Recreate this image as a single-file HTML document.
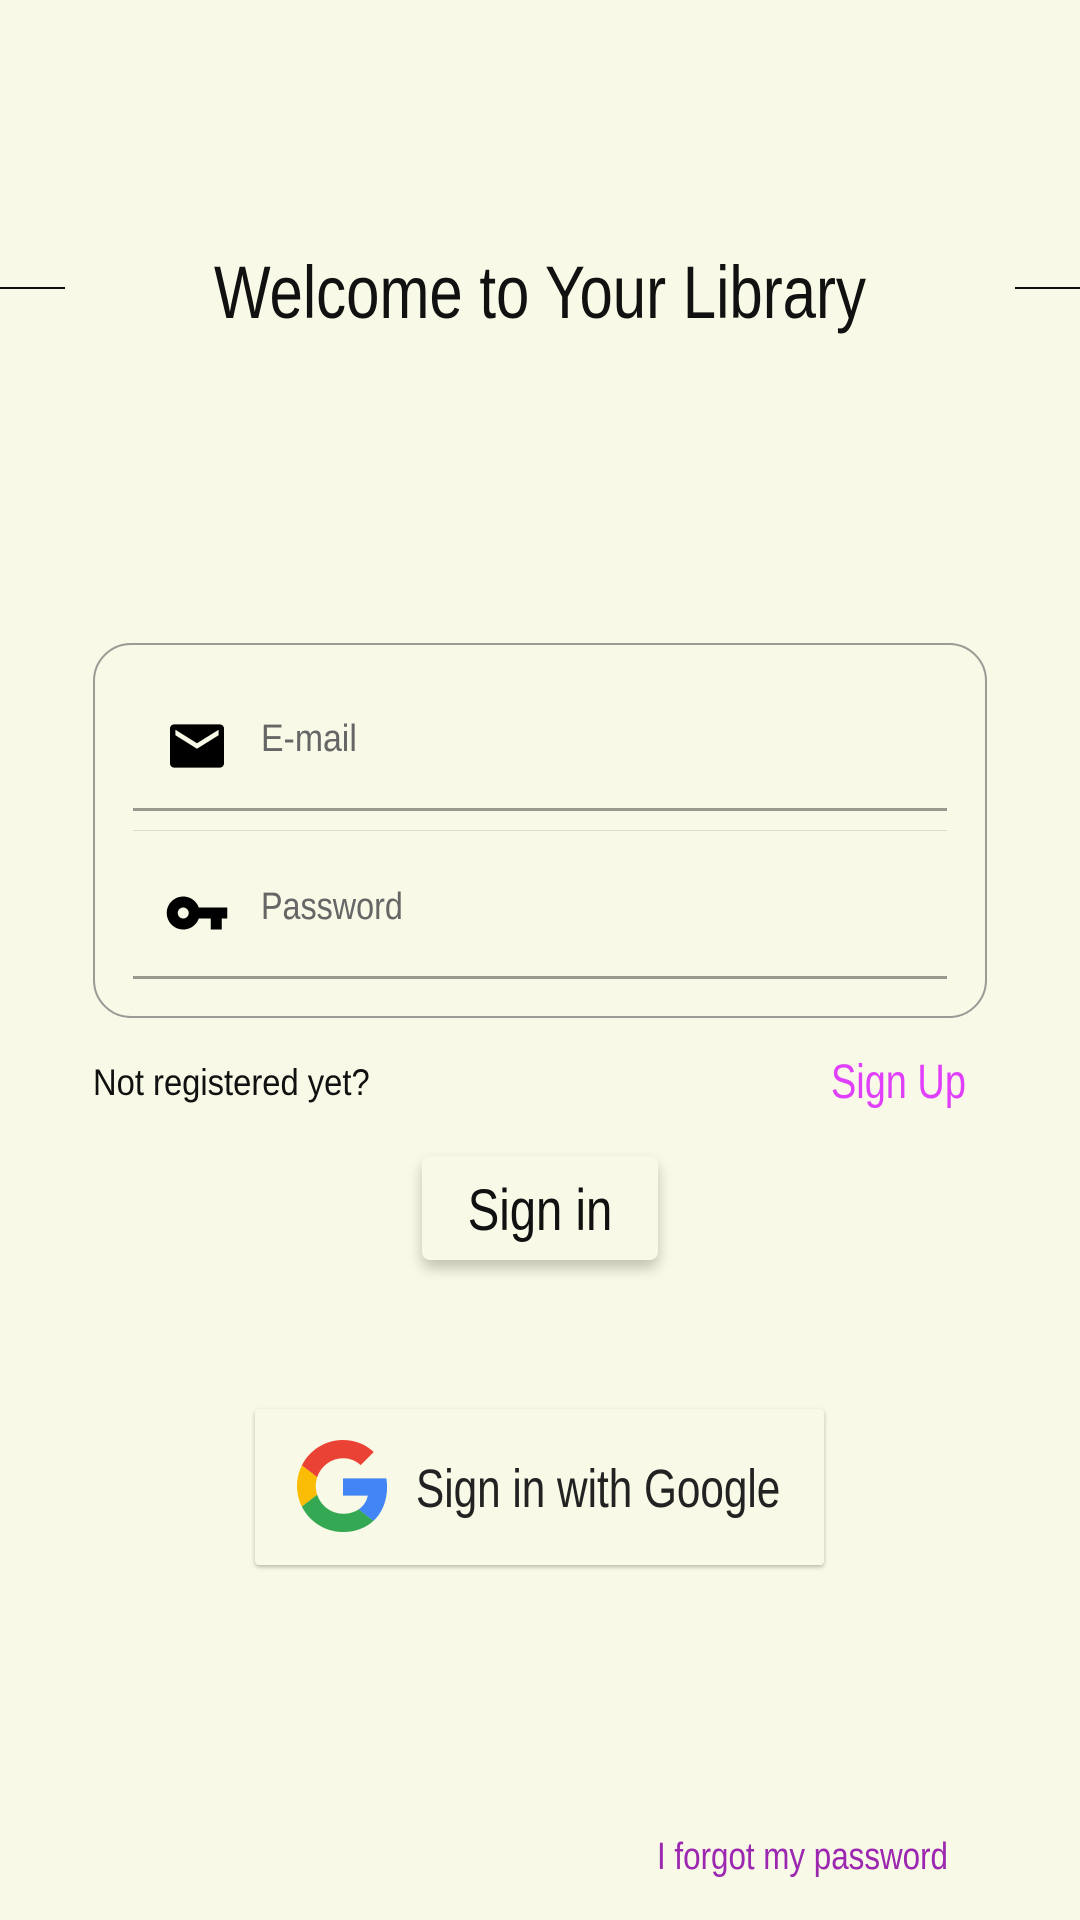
<!DOCTYPE html>
<html><head><meta charset="utf-8"><style>
*{margin:0;padding:0;box-sizing:border-box}
body{width:1080px;height:1920px;background:#f8f9e6;position:relative;overflow:hidden;font-family:"Liberation Sans",sans-serif}
.a{position:absolute;white-space:nowrap}
.t{line-height:1}
</style></head><body>
<div class="a" style="left:0;top:287px;width:65px;height:2px;background:#111"></div>
<div class="a" style="left:1015px;top:287px;width:65px;height:2px;background:#111"></div>
<div class="a t" style="left:0;width:1080px;text-align:center;top:256px;font-size:74px;color:#111;transform:scaleX(0.81);transform-origin:540px 0">Welcome to Your Library</div>

<div class="a" style="left:93px;top:643px;width:894px;height:375px;border:2px solid #9a9a96;border-radius:38px"></div>
<svg class="a" style="left:170px;top:724px" width="54" height="44" viewBox="2 4 20 16"><path d="M3.5 4h17c.8 0 1.5.7 1.5 1.5v13c0 .8-.7 1.5-1.5 1.5h-17c-.8 0-1.5-.7-1.5-1.5v-13C2 4.7 2.7 4 3.5 4zm16.5 4V6l-8 5-8-5v2l8 5 8-5z" fill="#000"/></svg>
<div class="a t" style="left:261px;top:720px;font-size:38px;color:#666;transform:scaleX(0.89);transform-origin:0 0">E-mail</div>
<div class="a" style="left:133px;top:808px;width:814px;height:3px;background:#9a9a90"></div>
<div class="a" style="left:133px;top:830px;width:814px;height:1px;background:#dcdccc"></div>
<svg class="a" style="left:164px;top:880px" width="66" height="66" viewBox="0 0 24 24"><path d="M12.65 10C11.83 7.67 9.61 6 7 6c-3.31 0-6 2.69-6 6s2.69 6 6 6c2.61 0 4.83-1.67 5.65-4H17v4h4v-4h2v-4H12.65zM7 14c-1.1 0-2-.9-2-2s.9-2 2-2 2 .9 2 2-.9 2-2 2z" fill="#000"/></svg>
<div class="a t" style="left:261px;top:888px;font-size:38px;color:#666;transform:scaleX(0.85);transform-origin:0 0">Password</div>
<div class="a" style="left:133px;top:976px;width:814px;height:3px;background:#9a9a90"></div>

<div class="a t" style="left:93px;top:1064px;font-size:37px;color:#111;transform:scaleX(0.885);transform-origin:0 0">Not registered yet?</div>
<div class="a t" style="left:831px;top:1059px;font-size:48px;color:#e040fb;transform:scaleX(0.79);transform-origin:0 0">Sign Up</div>

<div class="a" style="left:422px;top:1156px;width:236px;height:104px;border-radius:8px;background:#f8f9e6;box-shadow:0 8px 14px rgba(0,0,0,0.22)"></div>
<div class="a t" style="left:422px;width:236px;text-align:center;top:1182px;font-size:58px;color:#111;transform:scaleX(0.815);transform-origin:118px 0">Sign in</div>

<div class="a" style="left:255px;top:1409px;width:569px;height:156px;border-radius:4px;background:#f8f9e6;box-shadow:0 2px 4px rgba(0,0,0,0.25)"></div>
<svg class="a" style="left:297px;top:1440px" width="92" height="92" viewBox="0 0 48 48"><path fill="#EA4335" d="M24 9.5c3.540 0 6.71 1.22 9.21 3.6l6.85-6.85C35.9 2.38 30.47 0 24 0 14.62 0 6.51 5.38 2.56 13.22l7.98 6.19C12.43 13.72 17.74 9.5 24 9.5z"/><path fill="#4285F4" d="M46.98 24.55c0-1.57-.15-3.09-.38-4.55H24v9.02h12.94c-.58 2.96-2.260 5.48-4.78 7.18l7.73 6c4.51-4.18 7.09-10.36 7.09-17.65z"/><path fill="#FBBC05" d="M10.53 28.59c-.48-1.45-.76-2.99-.76-4.59s.27-3.14.76-4.59l-7.98-6.19C.92 16.46 0 20.12 0 24c0 3.88.92 7.54 2.56 10.78l7.97-6.19z"/><path fill="#34A853" d="M24 48c6.48 0 11.93-2.13 15.89-5.81l-7.73-6c-2.15 1.45-4.92 2.3-8.16 2.3-6.26 0-11.57-4.22-13.47-9.91l-7.98 6.19C6.51 42.62 14.62 48 24 48z"/></svg>
<div class="a t" style="left:416px;top:1462px;font-size:54px;color:#222;transform:scaleX(0.783);transform-origin:0 0">Sign in with Google</div>

<div class="a t" style="left:657px;top:1838px;font-size:38px;color:#9c27b0;transform:scaleX(0.825);transform-origin:0 0">I forgot my password</div>
</body></html>
